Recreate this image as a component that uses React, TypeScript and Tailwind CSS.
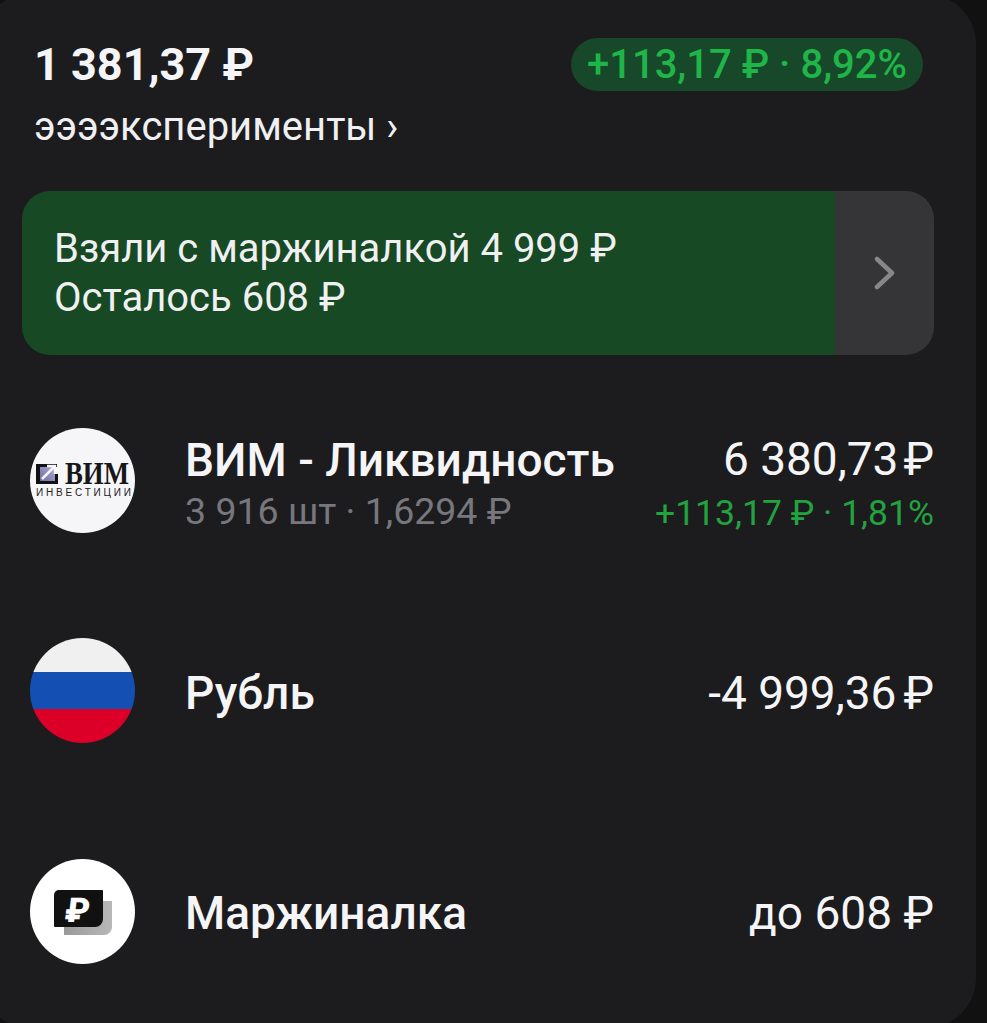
import React from "react";

const font = { fontFamily: "Roboto, 'Noto Sans', sans-serif" };

function VimLogo() {
  return (
    <div className="w-[105px] h-[105px] rounded-full bg-[#f6f6f9] shrink-0">
      <svg width="105" height="105" viewBox="0 0 105 105">
        <defs>
          <linearGradient id="vg" x1="0" y1="1" x2="1" y2="0">
            <stop offset="0" stopColor="#6a6aa6" />
            <stop offset="1" stopColor="#a9a9cf" />
          </linearGradient>
        </defs>
        <rect x="9" y="39" width="16" height="15" fill="url(#vg)" />
        <path d="M6 36h21v3H10v14h15v-7h3v10H6z" fill="#111" />
        <path d="M12 51l12-12M17 38h8v8" stroke="#f6f6f9" strokeWidth="2.500" fill="none" />
        <text x="35" y="56" fontFamily="'Liberation Serif', serif" fontSize="31" fontWeight="700" fill="#17171a" textLength="64" lengthAdjust="spacingAndGlyphs">ВИМ</text>
        <text x="6" y="68" fontFamily="'Liberation Sans', sans-serif" fontSize="10" fill="#222" textLength="95">ИНВЕСТИЦИИ</text>
      </svg>
    </div>
  );
}

function FlagIcon() {
  return (
    <div className="w-[105px] h-[105px] rounded-full overflow-hidden flex flex-col shrink-0">
      <div className="h-[34px] bg-[#f0f0f0]" />
      <div className="h-[37px] bg-[#1450b4]" />
      <div className="h-[34px] bg-[#dc0028]" />
    </div>
  );
}

function MarginIcon() {
  return (
    <div className="w-[105px] h-[105px] rounded-full bg-white shrink-0">
      <svg width="105" height="105" viewBox="0 0 105 105">
        <defs>
          <linearGradient id="mg" x1="0" y1="0" x2="1" y2="0">
            <stop offset="0" stopColor="#9a9a9a" />
            <stop offset="1" stopColor="#b8b8b8" />
          </linearGradient>
        </defs>
        <path d="M34 42h48v26a8 8 0 0 1-8 8H34z" fill="url(#mg)" />
        <path d="M29 31h43a1 1 0 0 1 1 1v28a8 8 0 0 1-8 8H25a1 1 0 0 1-1-1V36a5 5 0 0 1 5-5z" fill="#111" />
        <text x="0" y="0" transform="translate(46 62.500) skewX(-7)" textAnchor="middle" fontFamily="Roboto, sans-serif" fontSize="34" fontWeight="900" fill="#fff">₽</text>
      </svg>
    </div>
  );
}

function Row({ icon, title, sub, value, delta, className, leftClass, rightClass }: { icon: React.ReactNode; title: string; sub?: string; value: React.ReactNode; delta?: string; className?: string; leftClass?: string; rightClass?: string }) {
  return (
    <div className={`flex items-center h-[105px] ${className ?? ""}`}>
      {icon}
      <div className={`ml-[50px] flex-1 ${leftClass ?? ""}`}>
        <div className="text-[46px] leading-[52px] font-medium text-[#f5f5f7]">{title}</div>
        {sub && <div className="text-[37.500px] leading-[46px] mt-[2px] text-[#77777d]">{sub}</div>}
      </div>
      <div className={`text-right ${rightClass ?? ""}`}>
        <div className="text-[46px] leading-[52px] text-[#f5f5f7]">{value}</div>
        {delta && <div className="text-[35.500px] leading-[46px] mt-[5px] text-[#22a33f]">{delta}</div>}
      </div>
    </div>
  );
}

export default function App() {
  return (
    <div style={font} className="w-[987px] h-[1023px] bg-[#111112] overflow-hidden">
      <div className="w-[996px] h-[1034px] -ml-[20px] -mt-[6px] bg-[#1c1c1e] rounded-[50px] pt-[44px] pl-[42px]">
        <div className="flex justify-between pl-[12px] pr-[11px] w-[912px]">
          <div>
            <div className="text-[45px] leading-[54px] font-bold text-[#f5f5f7]">1 381,37 ₽</div>
            <div className="text-[40px] leading-[44px] mt-[13px] text-[#f0f0f2]">ээээксперименты ›</div>
          </div>
          <div className="h-[53px] rounded-full bg-[#17482a] px-[16px] text-[40px] leading-[53px] font-medium text-[#1fb548]">+113,17 ₽ · 8,92%</div>
        </div>
        <div className="flex w-[912px] h-[164px] mt-[42px] rounded-[28px] overflow-hidden">
          <div className="w-[813px] bg-[#164924] pl-[32px] pt-[33px] text-[40px] leading-[49px] text-[#f0f0f2]">
            <div>Взяли с маржиналкой 4 999 ₽</div>
            <div>Осталось 608 ₽</div>
          </div>
          <div className="flex-1 bg-[#353537] flex items-center justify-center">
            <svg width="22" height="34" viewBox="0 0 22 34"><path d="M3 3l15 14L3 31" fill="none" stroke="#87878a" strokeWidth="4.500" strokeLinecap="round" strokeLinejoin="round" /></svg>
          </div>
        </div>
        <div className="pl-[8px] w-[912px]">
          <Row className="mt-[73px]" leftClass="pt-[6px]" rightClass="pt-[7px]" icon={<VimLogo />} title="ВИМ - Ликвидность" sub="3 916 шт · 1,6294 ₽" value={<>6 380,73<span className="ml-[5px]">₽</span></>} delta="+113,17 ₽ · 1,81%" />
          <Row className="mt-[105px]" leftClass="pt-[4px]" rightClass="pt-[4px]" icon={<FlagIcon />} title="Рубль" value={<>-4 999,36<span className="ml-[7px]">₽</span></>} />
          <Row className="mt-[116px]" leftClass="pt-[2px]" rightClass="pt-[2px]" icon={<MarginIcon />} title="Маржиналка" value="до 608 ₽" />
        </div>
      </div>
    </div>
  );
}
